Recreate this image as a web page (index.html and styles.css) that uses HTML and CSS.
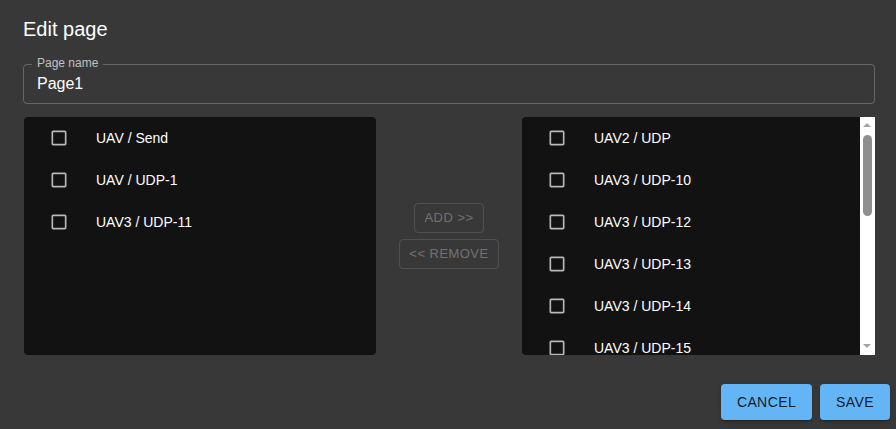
FILE: index.html
```html
<!DOCTYPE html>
<html lang="en">
<head>
  <meta charset="UTF-8"/>
  <title>Edit page</title>
  <link rel="stylesheet" href="styles.css">
</head>
<body>
  <div class="dialog">
    <h2 class="dialog-title">Edit page</h2>
    <div class="dialog-content">
      <div class="field">
        <label class="field-label">Page name</label>
        <div class="field-input">Page1</div>
      </div>
      <div class="transfer">
        <ul class="list" id="leftList"></ul>
        <div class="moves">
          <button class="move" disabled>ADD &gt;&gt;</button>
          <button class="move" disabled>&lt;&lt; REMOVE</button>
        </div>
        <div class="list-wrap">
          <ul class="list" id="rightList"></ul>
          <div class="scrollbar">
            <span class="arrow up"></span>
            <span class="thumb"></span>
            <span class="arrow down"></span>
          </div>
        </div>
      </div>
    </div>
    <div class="dialog-actions">
      <button class="btn">CANCEL</button>
      <button class="btn">SAVE</button>
    </div>
  </div>

  <script>
    const left = ['UAV / Send', 'UAV / UDP-1', 'UAV3 / UDP-11'];
    const right = ['UAV2 / UDP', 'UAV3 / UDP-10', 'UAV3 / UDP-12', 'UAV3 / UDP-13', 'UAV3 / UDP-14', 'UAV3 / UDP-15'];
    const box = '<span class="check"><svg viewBox="0 0 24 24"><path d="M19 5v14H5V5h14m0-2H5c-1.11 0-2 .9-2 2v14c0 1.1.89 2 2 2h14c1.1 0 2-.9 2-2V5c0-1.1-.9-2-2-2z"/></svg></span>';
    const render = (id, items) => {
      document.getElementById(id).innerHTML = items.map(n => `<li class="item">${box}${n}</li>`).join('');
    };
    render('leftList', left);
    render('rightList', right);
  </script>
</body>
</html>
```
FILE: styles.css
```css
body { margin:0; background:#383838; font-family:"Liberation Sans", Arial, sans-serif; color:#fff; }
.dialog { width:896px; height:429px; }
.dialog-title { margin:0; padding:13px 24px 0 23px; font-size:20px; font-weight:normal; line-height:32px; }
.dialog-content { padding:19px 21px 0 23px; }

.field { position:relative; height:38px; border:1px solid rgba(255,255,255,0.23); border-radius:4px; }
.field-label { position:absolute; top:-9px; left:8px; padding:0 5px; background:#383838; font-size:12px; line-height:14px; color:rgba(255,255,255,0.7); }
.field-input { padding:0 13px; font-size:16px; line-height:38px; }

.transfer { display:grid; grid-template-columns:352px 1fr 353px; grid-template-rows:238px; margin-top:13px; padding-left:1px; }
.list { margin:0; padding:0; list-style:none; background:#121212; border-radius:4px; overflow:hidden; }
.item { display:flex; align-items:center; height:42px; padding-left:16px; font-size:14px; }
.check { display:flex; width:56px; flex-shrink:0; }
.check svg { width:20px; height:20px; margin-left:9px; fill:rgba(255,255,255,0.7); }

.list-wrap { position:relative; min-height:0; }
.list-wrap .list { height:100%; }
.scrollbar { position:absolute; top:0; right:0; bottom:0; width:15px; background:#fff; }
.thumb { position:absolute; top:18px; left:3px; width:9px; height:81px; border-radius:5px; background:#8f8f8f; }
.arrow { position:absolute; left:3px; width:0; height:0; border-left:4px solid transparent; border-right:4px solid transparent; }
.arrow.up { top:6px; border-bottom:4px solid #a3a3a3; }
.arrow.down { bottom:7px; border-top:4px solid #a3a3a3; }

.moves { display:flex; flex-direction:column; align-items:center; justify-content:center; gap:6px; }
.move { font-family:inherit; font-size:13px; line-height:22px; letter-spacing:0.46px; padding:3px 9px; background:none;
  border:1px solid rgba(255,255,255,0.12); border-radius:4px; color:rgba(255,255,255,0.3); }

.dialog-actions { display:flex; justify-content:flex-end; gap:8px; padding:29px 6px 8px 8px; }
.btn { font-family:inherit; font-size:14px; line-height:24px; letter-spacing:0.4px; padding:6px 16px; border:none; border-radius:4px;
  background:#64b5f6; color:rgba(0,0,0,0.87); cursor:pointer;
  box-shadow:0 3px 1px -2px rgba(0,0,0,.2), 0 2px 2px 0 rgba(0,0,0,.14), 0 1px 5px 0 rgba(0,0,0,.12); }
```
